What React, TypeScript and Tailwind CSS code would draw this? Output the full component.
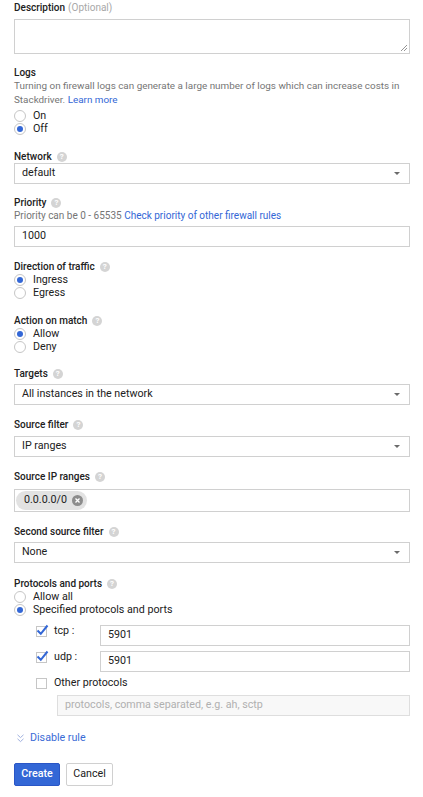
import React from "react";

const Help = () => (
  <span className="ml-[5px] inline-flex h-[10px] w-[10px] items-center justify-center rounded-full bg-[#d4d4d4] text-[8px] font-bold leading-none text-white">
    ?
  </span>
);

const Label = ({ children, help = true, className = "" }: { children: React.ReactNode; help?: boolean; className?: string }) => (
  <div className={`flex h-[13px] items-center text-[10px] font-medium leading-[13px] text-[#212121] ${className}`}>
    <span>{children}</span>
    {help && <Help />}
  </div>
);

const Radio = ({ checked, label }: { checked?: boolean; label: string }) => (
  <div className="flex h-[13px] items-center">
    <span className="flex h-[12px] w-[12px] items-center justify-center rounded-full border border-[#c6c6c6] bg-white">
      {checked && <span className="h-[6px] w-[6px] rounded-full bg-[#3367d6]" />}
    </span>
    <span className="ml-[7px] text-[10.7px] leading-[13px] text-[#212121]">{label}</span>
  </div>
);

const Arrow = () => (
  <svg width="6" height="3" viewBox="0 0 6 3" className="block">
    <path d="M0 0 L6 0 L3 3 Z" fill="#6b6b6b" />
  </svg>
);

const Select = ({ value, className = "" }: { value: string; className?: string }) => (
  <div className={`flex h-[21px] items-center justify-between border border-[#d0d0d0] bg-white pl-[7px] pr-[9px] ${className}`}>
    <span className="text-[10.7px] text-[#212121]">{value}</span>
    <Arrow />
  </div>
);

const Input = ({ value, className = "" }: { value: string; className?: string }) => (
  <div className={`flex h-[21px] items-center border border-[#d0d0d0] bg-white pl-[7px] ${className}`}>
    <span className="text-[10.7px] text-[#212121]">{value}</span>
  </div>
);

const Check = ({ checked }: { checked?: boolean }) => (
  <span className="relative block h-[11px] w-[11px] shrink-0 border border-[#c6c6c6] bg-white">
    {checked && (
      <svg width="13" height="12" viewBox="0 0 13 12" className="absolute left-[-1px] top-[-3px]">
        <path d="M1.5 6.5 L4.8 9.8 L11.5 1.5" stroke="#3367d6" strokeWidth="2" fill="none" />
      </svg>
    )}
  </span>
);

export default function App() {
  return (
    <div className="min-h-[797px] w-[423px] bg-white pl-[14px] pr-[13px] pt-[1px]" style={{ fontFamily: "Roboto, 'Liberation Sans', sans-serif" }}>
      {/* Description */}
      <div className="flex h-[13px] items-center text-[10px] leading-[13px]">
        <span className="font-medium text-[#212121]">Description</span>
        <span className="ml-[3px] text-[#a8a8a8]">(Optional)</span>
      </div>
      <div className="relative mt-[5px] h-[35px] border border-[#d0d0d0] bg-white">
        <svg width="8" height="8" viewBox="0 0 8 8" className="absolute bottom-[1px] right-[1px]">
          <path d="M7 1 L1 7 M7 4 L4 7" stroke="#7a7a7a" strokeWidth="0.8" />
        </svg>
      </div>

      {/* Logs */}
      <Label help={false} className="mt-[12px]">Logs</Label>
      <div className="text-[9.9px] leading-[14px] text-[#757575]">
        <div>Turning on firewall logs can generate a large number of logs which can increase costs in</div>
        <div>
          <span>Stackdriver. </span>
          <span className="text-[#3367d6]">Learn more</span>
        </div>
      </div>
      <div className="mt-[2px]">
        <Radio label="On" />
        <Radio label="Off" checked />
      </div>

      {/* Network */}
      <Label className="mt-[15px]">Network</Label>
      <Select value="default" />

      {/* Priority */}
      <Label className="mt-[12px]">Priority</Label>
      <div className="h-[13px] text-[10px] leading-[13px] text-[#757575]">
        <span>Priority can be 0 - 65535 </span>
        <span className="text-[#3367d6]">Check priority of other firewall rules</span>
      </div>
      <Input value="1000" className="mt-[4px]" />

      {/* Direction */}
      <Label className="mt-[13px]">Direction of traffic</Label>
      <Radio label="Ingress" checked />
      <Radio label="Egress" />

      {/* Action */}
      <Label className="mt-[15px]">Action on match</Label>
      <Radio label="Allow" checked />
      <Radio label="Deny" />

      {/* Targets */}
      <Label className="mt-[14px]">Targets</Label>
      <Select value="All instances in the network" className="mt-[4px]" />

      {/* Source filter */}
      <Label className="mt-[13px]">Source filter</Label>
      <Select value="IP ranges" className="mt-[5px]" />

      {/* Source IP ranges */}
      <Label className="mt-[13px]">Source IP ranges</Label>
      <div className="mt-[6px] flex h-[23px] items-center border border-[#d0d0d0] bg-white pl-[1px]">
        <div className="flex h-[19px] items-center rounded-full bg-[#e2e2e2] pl-[8px] pr-[4px]">
          <span className="text-[10.7px] text-[#212121]">0.0.0.0/0</span>
          <span className="ml-[5px] flex h-[11px] w-[11px] items-center justify-center rounded-full bg-[#8c8c8c]">
            <svg width="5" height="5" viewBox="0 0 5 5">
              <path d="M0.5 0.5 L4.5 4.5 M4.5 0.5 L0.5 4.5" stroke="white" strokeWidth="1.3" />
            </svg>
          </span>
        </div>
      </div>

      {/* Second source filter */}
      <Label className="mt-[13px]">Second source filter</Label>
      <Select value="None" className="mt-[4px]" />

      {/* Protocols */}
      <Label className="mt-[14px]">Protocols and ports</Label>
      <Radio label="Allow all" />
      <Radio label="Specified protocols and ports" checked />

      <div className="mt-[9px] pl-[22px]">
        <div className="flex items-start">
          <div className="mt-[1px]"><Check checked /></div>
          <span className="ml-[7px] w-[46px] text-[10.7px] leading-[12px] text-[#212121]">tcp :</span>
          <Input value="5901" className="flex-1" />
        </div>
        <div className="mt-[5px] flex items-start">
          <div className="mt-[1px]"><Check checked /></div>
          <span className="ml-[7px] w-[46px] text-[10.7px] leading-[12px] text-[#212121]">udp :</span>
          <Input value="5901" className="flex-1" />
        </div>
        <div className="mt-[5px] flex items-center">
          <Check />
          <span className="ml-[7px] text-[10.7px] leading-[12px] text-[#212121]">Other protocols</span>
        </div>
        <div className="ml-[21px] mt-[6px] flex h-[21px] items-center border border-[#dedede] bg-[#f8f8f8] pl-[7px]">
          <span className="text-[10.7px] text-[#b0b0b0]">protocols, comma separated, e.g. ah, sctp</span>
        </div>
      </div>

      {/* Disable rule */}
      <div className="mt-[15px] flex h-[14px] items-center pl-[3px]">
        <svg width="7" height="9" viewBox="0 0 7 9">
          <path d="M0.5 0.8 L3.5 3.6 L6.5 0.8 M0.5 4.8 L3.5 7.6 L6.5 4.8" stroke="#9fb0de" strokeWidth="1" fill="none" />
        </svg>
        <span className="ml-[6px] text-[10.7px] text-[#3b6bd6]">Disable rule</span>
      </div>

      {/* Buttons */}
      <div className="mt-[18px] flex gap-[6px]">
        <button className="h-[23px] w-[46px] rounded-[2px] border border-[#2a56c6] bg-[#3367d6] text-[10.7px] font-medium text-white">
          Create
        </button>
        <button className="h-[23px] w-[47px] rounded-[2px] border border-[#d0d0d0] bg-white text-[10.7px] text-[#212121]">
          Cancel
        </button>
      </div>
    </div>
  );
}
